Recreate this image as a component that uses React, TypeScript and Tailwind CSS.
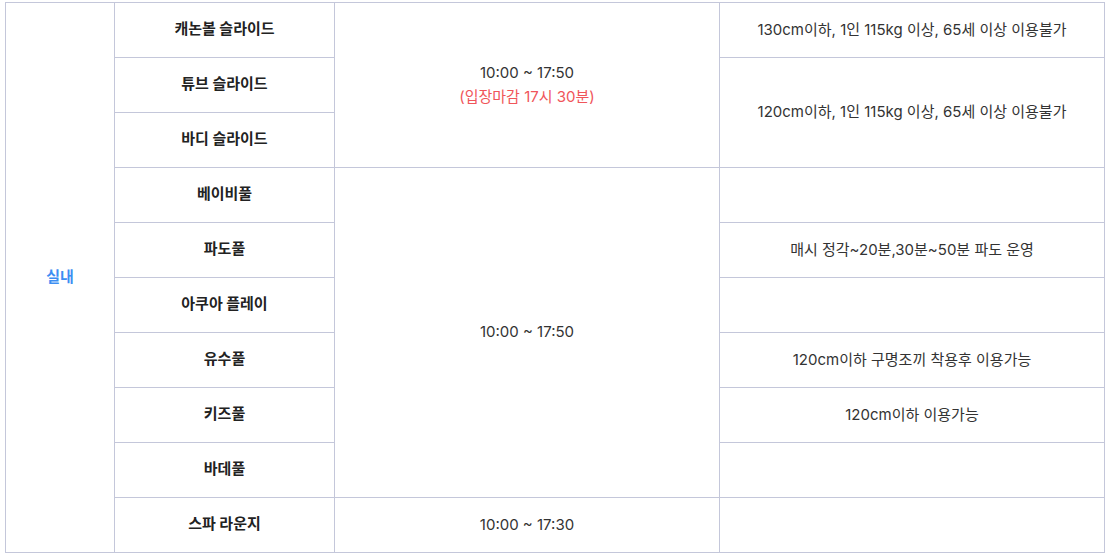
import React from "react";

const cell =
  "flex flex-col items-center justify-center border-r border-b border-[#c4c7da] text-center";

type Row = { name: string };

const rows: Row[] = [
  { name: "캐논볼 슬라이드" },
  { name: "튜브 슬라이드" },
  { name: "바디 슬라이드" },
  { name: "베이비풀" },
  { name: "파도풀" },
  { name: "아쿠아 플레이" },
  { name: "유수풀" },
  { name: "키즈풀" },
  { name: "바데풀" },
  { name: "스파 라운지" },
];

const rowStart = [
  "row-start-1",
  "row-start-2",
  "row-start-3",
  "row-start-4",
  "row-start-5",
  "row-start-6",
  "row-start-7",
  "row-start-8",
  "row-start-9",
  "row-start-10",
];

export default function App() {
  return (
    <div
      className="min-h-screen bg-white pl-[5px] pt-[2px]"
      style={{ fontFamily: 'Inter, "Noto Sans CJK KR", sans-serif' }}
    >
      <div className="grid w-[1100px] grid-cols-[109px_220px_385px_385px] grid-rows-[repeat(10,55px)] border-l border-t border-[#c4c7da] text-[15px] text-[#333]">
        {/* 구분 */}
        <div className={`${cell} col-start-1 row-span-10 row-start-1 text-[15px] font-bold text-[#3d8ef2]`}>
          실내
        </div>

        {/* 시설명 */}
        {rows.map((r, i) => (
          <div
            key={r.name}
            className={`${cell} col-start-2 ${rowStart[i]} pb-[2px] text-[15px] font-bold text-[#222]`}
          >
            {r.name}
          </div>
        ))}

        {/* 운영시간 */}
        <div className={`${cell} col-start-3 row-span-3 row-start-1 leading-6`}>
          <span>10:00 ~ 17:50</span>
          <span className="text-[#f0555a]">(입장마감 17시 30분)</span>
        </div>
        <div className={`${cell} col-start-3 row-span-6 row-start-4`}>10:00 ~ 17:50</div>
        <div className={`${cell} col-start-3 row-start-10`}>10:00 ~ 17:30</div>

        {/* 비고 */}
        <div className={`${cell} col-start-4 row-start-1`}>
          130cm이하, 1인 115kg 이상, 65세 이상 이용불가
        </div>
        <div className={`${cell} col-start-4 row-span-2 row-start-2`}>
          120cm이하, 1인 115kg 이상, 65세 이상 이용불가
        </div>
        <div className={`${cell} col-start-4 row-start-4`} />
        <div className={`${cell} col-start-4 row-start-5`}>매시 정각~20분,30분~50분 파도 운영</div>
        <div className={`${cell} col-start-4 row-start-6`} />
        <div className={`${cell} col-start-4 row-start-7`}>120cm이하 구명조끼 착용후 이용가능</div>
        <div className={`${cell} col-start-4 row-start-8`}>120cm이하 이용가능</div>
        <div className={`${cell} col-start-4 row-start-9`} />
        <div className={`${cell} col-start-4 row-start-10`} />
      </div>
    </div>
  );
}
